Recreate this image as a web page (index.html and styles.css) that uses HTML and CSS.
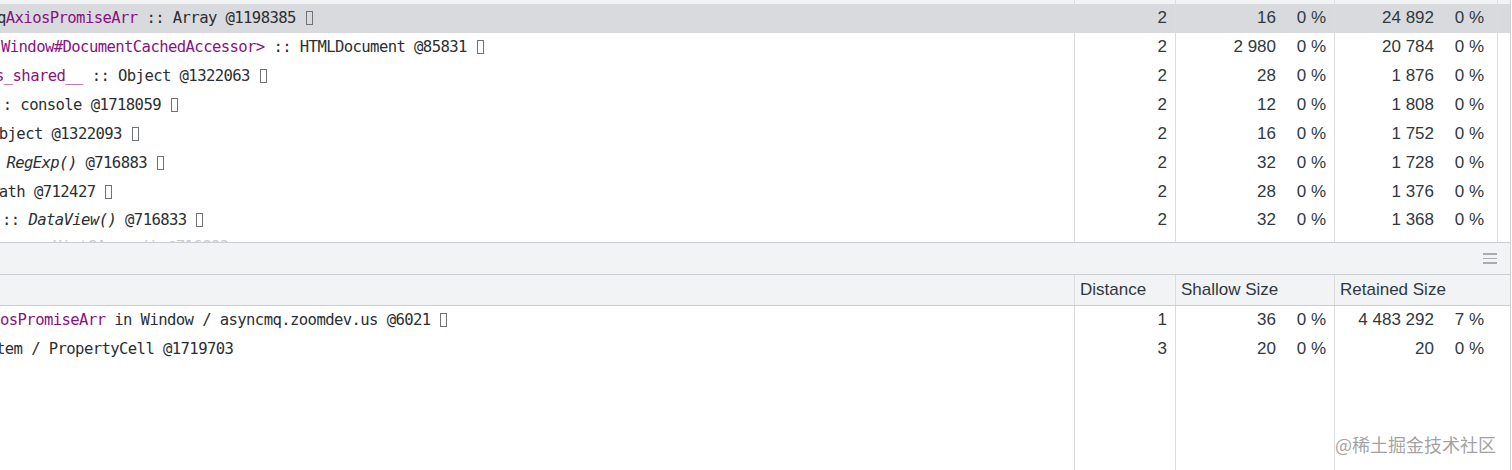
FILE: index.html
```html
<!DOCTYPE html>
<html>
<head>
<meta charset="utf-8">
<link rel="stylesheet" href="styles.css">
</head>
<body>
<div class="panel">
  <section class="upper">
    <div class="row strip">
      <div class="c name"></div><div class="c dist"></div><div class="c shal"></div><div class="c ret"></div><div class="c gutter"></div>
    </div>
    <div class="row selected">
      <div class="c name"><span class="m3">q</span><span class="pu">AxiosPromiseArr</span> :: Array @1198385 <span class="tofu"></span></div>
      <div class="c dist">2</div>
      <div class="c shal"><span class="v">16</span><span class="p">0 %</span></div>
      <div class="c ret"><span class="v">24 892</span><span class="p">0 %</span></div>
      <div class="c gutter"></div>
    </div>
    <div class="row">
      <div class="c name"><span class="pu m1">Window#DocumentCachedAccessor&gt;</span> :: HTMLDocument @85831 <span class="tofu"></span></div>
      <div class="c dist">2</div>
      <div class="c shal"><span class="v">2 980</span><span class="p">0 %</span></div>
      <div class="c ret"><span class="v">20 784</span><span class="p">0 %</span></div>
      <div class="c gutter"></div>
    </div>
    <div class="row">
      <div class="c name"><span class="pu m5">s_shared__</span> :: Object @1322063 <span class="tofu"></span></div>
      <div class="c dist">2</div>
      <div class="c shal"><span class="v">28</span><span class="p">0 %</span></div>
      <div class="c ret"><span class="v">1 876</span><span class="p">0 %</span></div>
      <div class="c gutter"></div>
    </div>
    <div class="row">
      <div class="c name"><span class="m6">:: console @1718059 </span><span class="tofu"></span></div>
      <div class="c dist">2</div>
      <div class="c shal"><span class="v">12</span><span class="p">0 %</span></div>
      <div class="c ret"><span class="v">1 808</span><span class="p">0 %</span></div>
      <div class="c gutter"></div>
    </div>
    <div class="row">
      <div class="c name"><span class="m10">Object @1322093 </span><span class="tofu"></span></div>
      <div class="c dist">2</div>
      <div class="c shal"><span class="v">16</span><span class="p">0 %</span></div>
      <div class="c ret"><span class="v">1 752</span><span class="p">0 %</span></div>
      <div class="c gutter"></div>
    </div>
    <div class="row">
      <div class="c name"><span class="m20">:: </span><i>RegExp()</i> @716883 <span class="tofu"></span></div>
      <div class="c dist">2</div>
      <div class="c shal"><span class="v">32</span><span class="p">0 %</span></div>
      <div class="c ret"><span class="v">1 728</span><span class="p">0 %</span></div>
      <div class="c gutter"></div>
    </div>
    <div class="row">
      <div class="c name"><span class="m10">Math @712427 </span><span class="tofu"></span></div>
      <div class="c dist">2</div>
      <div class="c shal"><span class="v">28</span><span class="p">0 %</span></div>
      <div class="c ret"><span class="v">1 376</span><span class="p">0 %</span></div>
      <div class="c gutter"></div>
    </div>
    <div class="row">
      <div class="c name"><span class="p3">:: </span><i>DataView()</i> @716833 <span class="tofu"></span></div>
      <div class="c dist">2</div>
      <div class="c shal"><span class="v">32</span><span class="p">0 %</span></div>
      <div class="c ret"><span class="v">1 368</span><span class="p">0 %</span></div>
      <div class="c gutter"></div>
    </div>
    <div class="row faint">
      <div class="c name">   :: Uint8Array() @716893</div>
      <div class="c dist"></div>
      <div class="c shal"></div>
      <div class="c ret"></div>
      <div class="c gutter"></div>
    </div>
    <div class="row filler">
      <div class="c name"></div><div class="c dist"></div><div class="c shal"></div><div class="c ret"></div><div class="c gutter"></div>
    </div>
  </section>

  <div class="splitbar">
    <span class="grip"><i></i><i></i><i></i></span>
  </div>

  <section class="lower">
    <div class="row head">
      <div class="c name"></div>
      <div class="c dist">Distance</div>
      <div class="c shal">Shallow Size</div>
      <div class="c ret">Retained Size</div>
      <div class="c gutter"></div>
    </div>
    <div class="row">
      <div class="c name"><span class="pu">osPromiseArr</span> in Window / asyncmq.zoomdev.us @6021 <span class="tofu"></span></div>
      <div class="c dist">1</div>
      <div class="c shal"><span class="v">36</span><span class="p">0 %</span></div>
      <div class="c ret"><span class="v">4 483 292</span><span class="p">7 %</span></div>
      <div class="c gutter"></div>
    </div>
    <div class="row">
      <div class="c name gray"><span class="m4">tem / PropertyCell @1719703</span></div>
      <div class="c dist">3</div>
      <div class="c shal"><span class="v">20</span><span class="p">0 %</span></div>
      <div class="c ret"><span class="v">20</span><span class="p">0 %</span></div>
      <div class="c gutter"></div>
    </div>
    <div class="row filler">
      <div class="c name"></div><div class="c dist"></div><div class="c shal"></div><div class="c ret"></div><div class="c gutter"></div>
    </div>
  </section>

  <div class="watermark">@稀土掘金技术社区</div>
</div>
</body>
</html>
```

FILE: styles.css
```css
* { box-sizing: border-box; }
html, body { margin: 0; padding: 0; background: #fff; }
body { width: 1512px; height: 470px; overflow: hidden; }

.panel {
  position: relative;
  width: 1511px;
  height: 470px;
  display: flex;
  flex-direction: column;
  border-right: 1px solid #cdcfd3;
  color: #303942;
}

.upper {
  height: 243px;
  flex: none;
  display: flex;
  flex-direction: column;
  overflow: hidden;
  border-bottom: 1px solid #cacdd1;
}

.lower {
  flex: 1;
  display: flex;
  flex-direction: column;
  overflow: hidden;
}

.row {
  display: grid;
  grid-template-columns: 1074px 101px 159px 163px 13px;
  height: 28.86px;
  flex: none;
  font-family: "Liberation Sans", Arial, sans-serif;
  font-size: 17px;
}

.row.strip { height: 4px; background: #f1f3f4; }
.row.selected { background: #d9dadd; }
.row.filler { flex: 1; height: auto; }

.c {
  display: flex;
  align-items: center;
  overflow: hidden;
  white-space: pre;
  border-left: 1px solid #dadce0;
}

.c.name {
  border-left: none;
  font-family: "DejaVu Sans Mono", monospace;
  font-size: 15.6px;
  letter-spacing: -0.6px;
  color: #2b2f33;
}

.c.dist { justify-content: flex-end; padding-right: 8px; }
.c.shal { justify-content: flex-end; padding-right: 8px; }
.c.ret { justify-content: flex-end; padding-right: 13px; }
.c.gutter { border-left: 1px solid #dadce0; }
.lower .c.gutter { border-left: none; }

.v { text-align: right; }
.p { width: 50px; text-align: right; flex: none; }

.pu { color: #881280; }
.gray { color: #6a6d71; }
.faint .c.name {
  color: #c9cbce;
  align-items: flex-start;
  padding-top: 3px;
  line-height: 18px;
}

.m1 { margin-left: 1px; }
.m3 { margin-left: -3px; }
.m4 { margin-left: -4px; }
.m5 { margin-left: -5px; }
.m6 { margin-left: -6px; }
.m10 { margin-left: -10px; }
.m20 { margin-left: -20px; }
.p3 { margin-left: 2px; }

.tofu {
  display: inline-block;
  width: 7px;
  height: 14px;
  border: 1px solid #6f7276;
  margin-left: 1px;
  align-self: center;
}

.splitbar {
  height: 32px;
  flex: none;
  background: #f1f3f4;
  border-bottom: 1px solid #cacdd1;
  display: flex;
  justify-content: flex-end;
  align-items: center;
  padding-right: 13px;
}

.grip {
  display: flex;
  flex-direction: column;
  gap: 3px;
  width: 14px;
}
.grip i {
  display: block;
  height: 1.5px;
  background: #a9acb0;
}

.row.head {
  height: 31px;
  background: #f1f3f4;
  border-bottom: 1px solid #cacdd1;
  color: #303942;
}
.row.head .c { justify-content: flex-start; padding-left: 5px; padding-right: 0; }
.row.head .c.gutter { padding-left: 0; }

.watermark {
  position: absolute;
  right: 14px;
  bottom: 16px;
  font-family: "Noto Sans CJK SC", sans-serif;
  font-size: 18px;
  color: rgba(120, 120, 120, 0.7);
  line-height: 20px;
}
```
